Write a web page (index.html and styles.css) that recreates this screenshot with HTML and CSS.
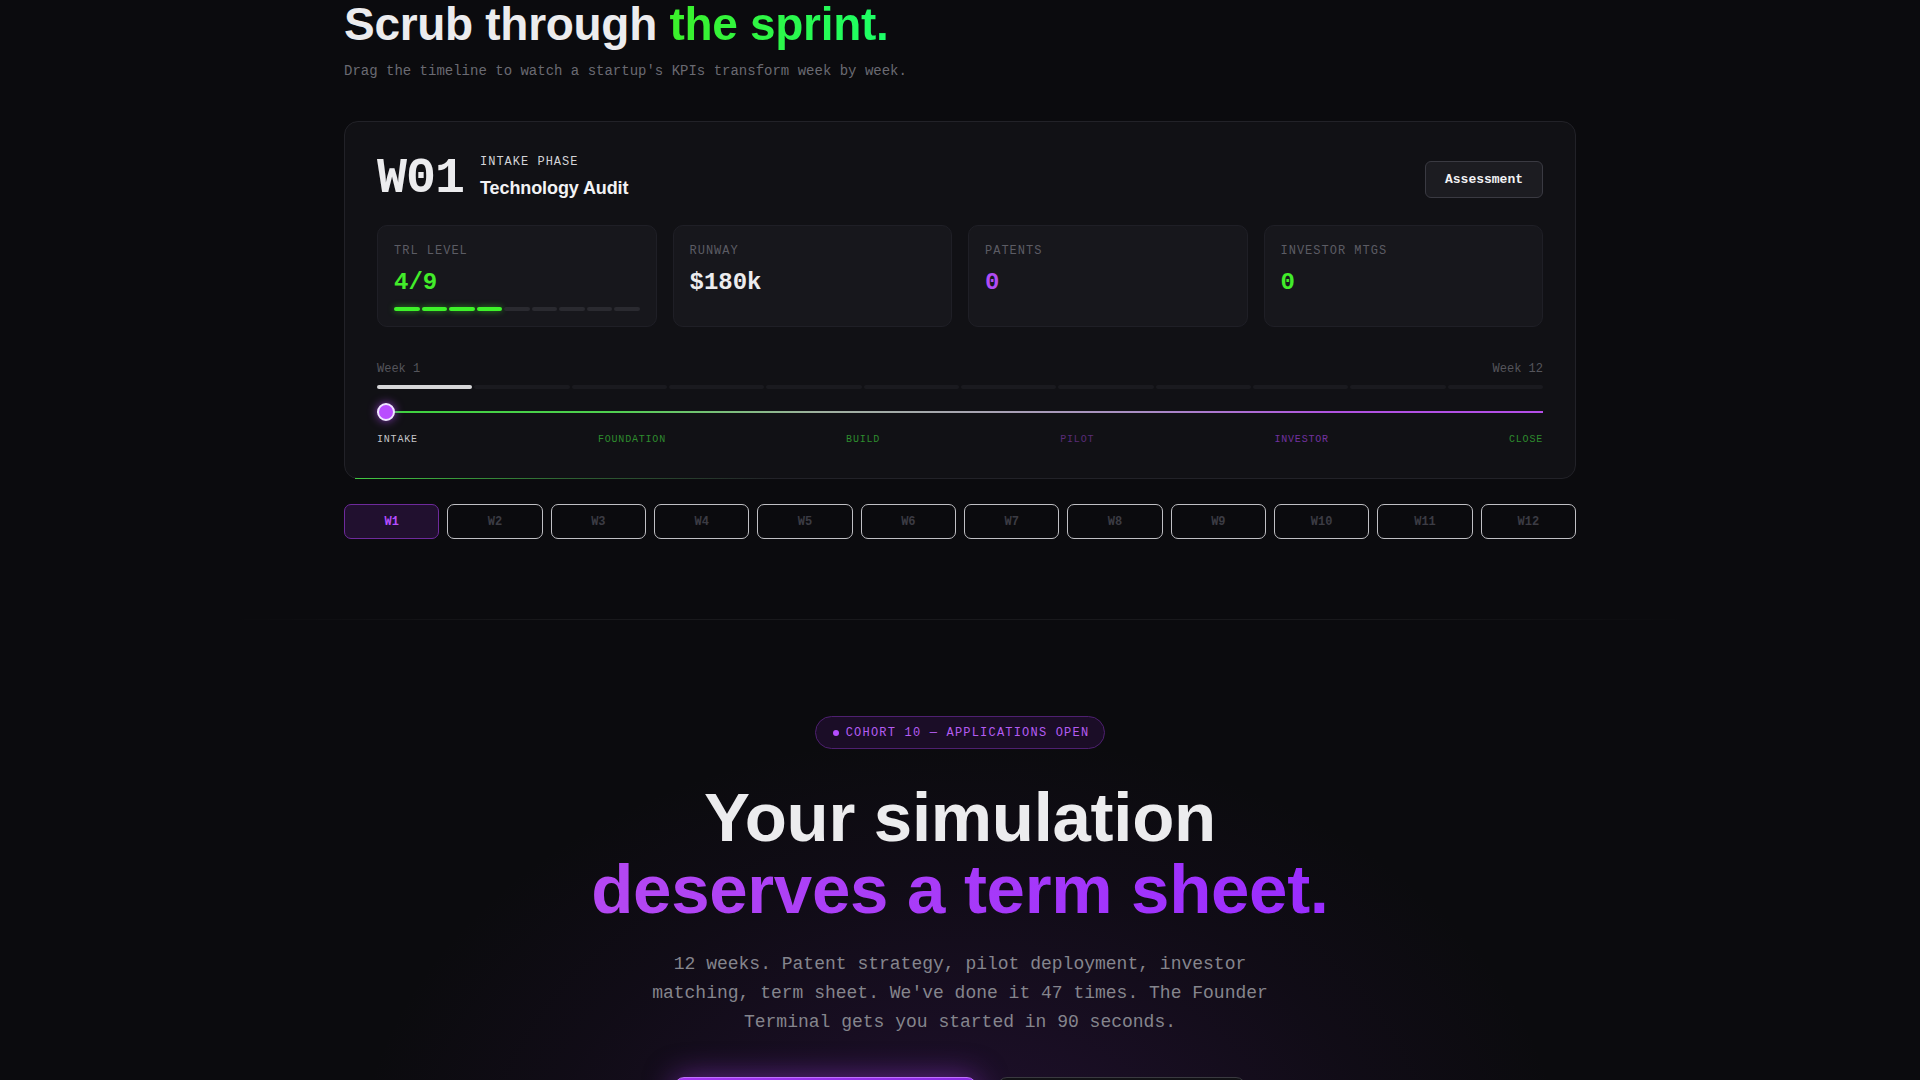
FILE: index.html
```html
<!DOCTYPE html>
<html lang="en">
<head>
<meta charset="utf-8">
<title>Scrub through the sprint</title>
<link rel="stylesheet" href="styles.css">
</head>
<body>
<section class="sprint">
  <div class="container">
    <h2 class="sprint-title">Scrub through <span class="accent-green">the sprint.</span></h2>
    <p class="sprint-sub">Drag the timeline to watch a startup's KPIs transform week by week.</p>

    <div class="panel">
      <div class="panel-head">
        <div class="week-id">
          <span class="week-num">W01</span>
          <div class="phase">
            <span class="phase-label">INTAKE PHASE</span>
            <span class="phase-name">Technology Audit</span>
          </div>
        </div>
        <button class="tag-btn">Assessment</button>
      </div>

      <div class="stats">
        <div class="stat">
          <div class="stat-label">TRL LEVEL</div>
          <div class="stat-value green">4/9</div>
          <div class="trl-bar">
            <span class="on"></span><span class="on"></span><span class="on"></span><span class="on"></span><span></span><span></span><span></span><span></span><span></span>
          </div>
        </div>
        <div class="stat">
          <div class="stat-label">RUNWAY</div>
          <div class="stat-value white">$180k</div>
        </div>
        <div class="stat">
          <div class="stat-label">PATENTS</div>
          <div class="stat-value purple">0</div>
        </div>
        <div class="stat">
          <div class="stat-label">INVESTOR MTGS</div>
          <div class="stat-value green">0</div>
        </div>
      </div>

      <div class="timeline">
        <div class="timeline-ends"><span>Week 1</span><span>Week 12</span></div>
        <div class="week-segs">
          <span class="on"></span><span></span><span></span><span></span><span></span><span></span><span></span><span></span><span></span><span></span><span></span><span></span>
        </div>
        <div class="slider">
          <div class="track"></div>
          <div class="thumb"></div>
        </div>
        <div class="phases">
          <span class="ph-intake">INTAKE</span>
          <span class="ph-green">FOUNDATION</span>
          <span class="ph-green">BUILD</span>
          <span class="ph-pilot">PILOT</span>
          <span class="ph-investor">INVESTOR</span>
          <span class="ph-green">CLOSE</span>
        </div>
      </div>
    </div>

    <div class="week-tabs">
      <button class="week-tab active">W1</button>
      <button class="week-tab">W2</button>
      <button class="week-tab">W3</button>
      <button class="week-tab">W4</button>
      <button class="week-tab">W5</button>
      <button class="week-tab">W6</button>
      <button class="week-tab">W7</button>
      <button class="week-tab">W8</button>
      <button class="week-tab">W9</button>
      <button class="week-tab">W10</button>
      <button class="week-tab">W11</button>
      <button class="week-tab">W12</button>
    </div>
  </div>
</section>

<div class="divider"></div>

<section class="cta">
  <div class="badge"><span class="dot"></span>COHORT 10 — APPLICATIONS OPEN</div>
  <h2 class="cta-title">
    <span class="line1">Your simulation</span>
    <span class="line2">deserves a term sheet.</span>
  </h2>
  <p class="cta-text">12 weeks. Patent strategy, pilot deployment, investor matching, term sheet. We've done it 47 times. The Founder Terminal gets you started in 90 seconds.</p>
  <div class="cta-actions">
    <a class="btn-primary" href="#">Open the Founder Terminal</a>
    <a class="btn-ghost" href="#">View cohort details</a>
  </div>
</section>
</body>
</html>
```

FILE: styles.css
```css
* { box-sizing: border-box; }

html { overflow: hidden; }

body {
  margin: 0;
  background: #0b0b0e;
  color: #e8e8ea;
  font-family: "Liberation Sans", Arial, sans-serif;
}

.container {
  width: 1232px;
  margin: 0 auto;
}

/* ---------- Sprint section ---------- */
.sprint {
  padding-top: 1px;
  padding-bottom: 80px;
}

.sprint-title {
  margin: 0;
  font-size: 46px;
  line-height: 1;
  font-weight: 700;
  letter-spacing: -0.3px;
  color: #ececee;
}

.accent-green {
  background: linear-gradient(90deg, #3cf02a, #1cff68);
  -webkit-background-clip: text;
  background-clip: text;
  color: transparent;
}

.sprint-sub {
  margin: 14px 0 0;
  font-family: "Liberation Mono", "DejaVu Sans Mono", monospace;
  font-size: 14px;
  line-height: 21px;
  color: #6a6a72;
}

.panel {
  position: relative;
  margin-top: 39px;
  background: #111115;
  border: 1px solid #222228;
  border-radius: 14px;
  padding: 32px 32px 31px;
}

.panel::after {
  content: "";
  position: absolute;
  left: 10px;
  bottom: -1px;
  width: 420px;
  height: 1px;
  background: linear-gradient(90deg, rgba(70, 220, 70, 0.9), rgba(70, 220, 70, 0.35) 50%, rgba(70, 220, 70, 0));
}

.panel-head {
  display: flex;
  align-items: center;
  justify-content: space-between;
}

.week-id {
  display: flex;
  align-items: flex-start;
  gap: 16px;
}

.week-num {
  font-family: "Liberation Mono", "DejaVu Sans Mono", monospace;
  font-size: 50px;
  line-height: 50px;
  font-weight: 700;
  letter-spacing: -1px;
  color: #ececee;
}

.phase {
  display: flex;
  flex-direction: column;
  gap: 7px;
}

.phase-label {
  font-family: "Liberation Mono", "DejaVu Sans Mono", monospace;
  font-size: 12px;
  line-height: 16px;
  letter-spacing: 1px;
  color: #d4d4d8;
}

.phase-name {
  font-size: 18px;
  line-height: 23px;
  font-weight: 700;
  letter-spacing: -0.1px;
  color: #f2f2f4;
}

.tag-btn {
  font-family: "Liberation Mono", "DejaVu Sans Mono", monospace;
  font-size: 13px;
  line-height: 15px;
  font-weight: 700;
  color: #f2f2f4;
  background: #1c1c21;
  border: 1px solid #3a3a42;
  border-radius: 6px;
  padding: 10px 19px;
}

.stats {
  display: grid;
  grid-template-columns: repeat(4, 1fr);
  gap: 16px;
  margin-top: 21px;
}

.stat {
  background: #17171c;
  border: 1px solid #1f1f26;
  border-radius: 10px;
  padding: 17px 16px 15px;
}

.stat-label {
  font-family: "Liberation Mono", "DejaVu Sans Mono", monospace;
  font-size: 12px;
  line-height: 16px;
  letter-spacing: 1px;
  color: #5c5c64;
}

.stat-value {
  margin-top: 9px;
  font-family: "Liberation Mono", "DejaVu Sans Mono", monospace;
  font-size: 24px;
  line-height: 29px;
  font-weight: 700;
}

.stat-value.green { color: #42ec2a; }
.stat-value.white { color: #ececee; }
.stat-value.purple { color: #b04cf5; }

.trl-bar {
  display: flex;
  gap: 2px;
  margin-top: 10px;
  height: 4px;
}

.trl-bar span {
  flex: 1;
  border-radius: 2px;
  background: #2a2a30;
}

.trl-bar span.on {
  background: #3ef22a;
  box-shadow: 0 0 6px rgba(62, 242, 42, 0.55);
}

/* timeline */
.timeline {
  margin-top: 34px;
}

.timeline-ends {
  display: flex;
  justify-content: space-between;
  font-family: "Liberation Mono", "DejaVu Sans Mono", monospace;
  font-size: 12px;
  line-height: 16px;
  color: #55555c;
}

.week-segs {
  display: flex;
  gap: 2px;
  margin-top: 8px;
  height: 4px;
}

.week-segs span {
  flex: 1;
  border-radius: 2px;
  background: #1a1a1f;
}

.week-segs span.on {
  background: #d6d6d8;
}

.slider {
  position: relative;
  display: flex;
  align-items: center;
  height: 18px;
  margin-top: 14px;
}

.track {
  flex: 1;
  height: 2px;
  background: linear-gradient(90deg, #3ed23e 0%, #4fd04f 20%, #9fb09f 38%, #a8a4b2 52%, #a98cc4 66%, #b052e0 82%, #b44ee8 100%);
}

.thumb {
  position: absolute;
  left: 0;
  top: 0;
  width: 18px;
  height: 18px;
  border-radius: 50%;
  background: #b94dff;
  border: 2px solid #efe6ff;
  box-shadow: 0 0 10px rgba(185, 77, 255, 0.7);
}

.phases {
  display: flex;
  justify-content: space-between;
  margin-top: 12px;
  font-family: "Liberation Mono", "DejaVu Sans Mono", monospace;
  font-size: 10px;
  line-height: 14px;
  letter-spacing: 0.8px;
}

.ph-intake { color: #c6c6ca; }
.ph-green { color: #2e8c2e; }
.ph-pilot { color: #5a2c78; }
.ph-investor { color: #7332a0; }

/* week tabs */
.week-tabs {
  display: grid;
  grid-template-columns: repeat(12, 1fr);
  gap: 8px;
  margin-top: 25px;
}

.week-tab {
  height: 35px;
  padding: 0;
  background: transparent;
  border: 1px solid #c0c0c4;
  border-radius: 7px;
  font-family: "Liberation Mono", "DejaVu Sans Mono", monospace;
  font-size: 12px;
  font-weight: 700;
  color: #3c3c44;
}

.week-tab.active {
  background: #21102f;
  border-color: #6e2a9c;
  color: #b44dff;
}

/* divider */
.divider {
  height: 1px;
  background: linear-gradient(90deg, rgba(255, 255, 255, 0) 12%, rgba(255, 255, 255, 0.06) 30%, rgba(255, 255, 255, 0.06) 70%, rgba(255, 255, 255, 0) 88%);
}

/* ---------- CTA section ---------- */
.cta {
  padding: 96px 0 80px;
  text-align: center;
  background:
    radial-gradient(ellipse 760px 560px at 50% 95%, rgba(120, 36, 180, 0.20), rgba(80, 24, 120, 0.08) 55%, rgba(11, 11, 14, 0) 80%),
    #0b0b0e;
}

.badge {
  display: flex;
  align-items: center;
  gap: 7px;
  width: fit-content;
  height: 33px;
  margin: 0 auto;
  padding: 0 15px 0 17px;
  border: 1px solid #4e2070;
  background: #1b0d27;
  border-radius: 999px;
  font-family: "Liberation Mono", "DejaVu Sans Mono", monospace;
  font-size: 12px;
  letter-spacing: 1.2px;
  color: #b45cf2;
}

.dot {
  width: 6px;
  height: 6px;
  border-radius: 50%;
  background: #b44dff;
}

.cta-title {
  margin: 33px 0 0;
  font-size: 69px;
  line-height: 1.05;
  font-weight: 700;
  letter-spacing: -0.3px;
}

.line1 {
  display: block;
  width: fit-content;
  margin: 0 auto;
  color: #ececee;
}

.line2 {
  display: block;
  width: fit-content;
  margin: 0 auto;
  background: linear-gradient(90deg, #b448f2, #9a2cff);
  -webkit-background-clip: text;
  background-clip: text;
  color: transparent;
}

.cta-text {
  max-width: 640px;
  margin: 23px auto 0;
  font-family: "Liberation Mono", "DejaVu Sans Mono", monospace;
  font-size: 18px;
  line-height: 29px;
  color: #85858d;
}

.cta-actions {
  display: flex;
  justify-content: center;
  gap: 20px;
  margin-top: 40px;
}

.btn-primary,
.btn-ghost {
  font-family: "Liberation Mono", "DejaVu Sans Mono", monospace;
  font-size: 15px;
  line-height: 20px;
  font-weight: 700;
  text-decoration: none;
  padding: 16px 38px;
  border-radius: 10px;
}

.btn-primary {
  color: #ffffff;
  background: linear-gradient(90deg, #a636f2, #8a2be2);
  border: 1px solid #c070ff;
  box-shadow: 0 0 30px rgba(168, 60, 240, 0.5);
}

.btn-ghost {
  color: #d8d8dc;
  background: #121216;
  border: 1px solid #3a3a40;
}
```
